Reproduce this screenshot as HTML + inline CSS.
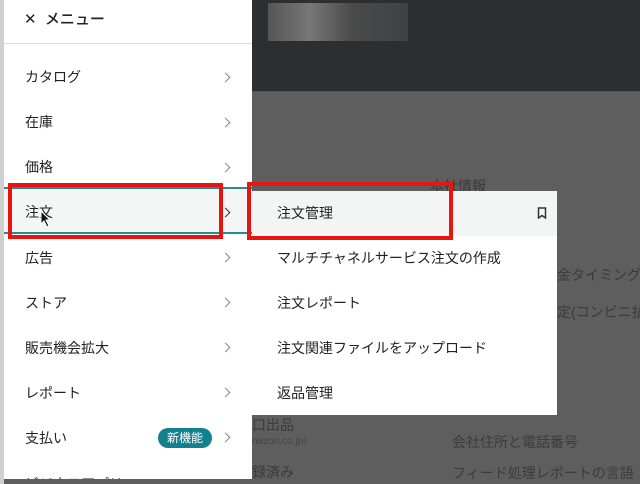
<!DOCTYPE html>
<html><head><meta charset="utf-8"><style>
*{margin:0;padding:0;box-sizing:border-box}
body{width:640px;height:484px;overflow:hidden;background:#5e5e5e;position:relative;font-family:"Liberation Sans","Noto Sans CJK JP",sans-serif;}
.abs{position:absolute}
.dark{left:252px;top:0;width:388px;height:91px;background:#2c2f31}
.blur{left:268px;top:3px;width:140px;height:38px;background:linear-gradient(90deg,#555,#777 30%,#4a4a4a 60%,#3f4244);}
.bgt{color:#3a3a3a;font-size:14px;white-space:nowrap}
.left{left:4px;top:0;width:248px;height:479px;background:#fff;overflow:hidden}
.hdr{left:0;top:0;width:248px;height:44px;border-bottom:1px solid #ddd}
.item{position:absolute;left:21px;font-size:14px;color:#222;line-height:20px;white-space:nowrap}
.chev{position:absolute;left:218px;width:7px;height:7px;border-right:1.5px solid #888;border-top:1.5px solid #888;transform:rotate(45deg)}
.sub{left:252px;top:191px;width:305px;height:224px;background:#fff}
.sitem{position:absolute;left:25px;font-size:14px;color:#222;line-height:20px}
.red{position:absolute;border:4px solid #e8140f}
</style></head><body>
<div class="abs dark"></div>
<div class="abs blur"></div>
<div class="abs" style="left:252px;top:91px;width:388px;height:1px;background:#555"></div>
<div class="abs bgt" style="left:430px;top:176px">本社情報</div>
<div class="abs bgt" style="left:557px;top:265px">金タイミング</div>
<div class="abs bgt" style="left:557px;top:302px">定(コンビニ払</div>
<div class="abs bgt" style="left:252px;top:415px">口出品</div>
<div class="abs bgt" style="left:252px;top:432px;font-size:10px;color:#444">nazon.co.jp）</div>
<div class="abs bgt" style="left:252px;top:462px">録済み</div>
<div class="abs bgt" style="left:452px;top:432px;color:#3c3c3c">会社住所と電話番号</div>
<div class="abs bgt" style="left:452px;top:463px;color:#3c3c3c">フィード処理レポートの言語</div>
<div class="abs" style="left:0;top:0;width:4px;height:484px;background:#cfcfcf"></div>

<div class="abs left">
  <div class="abs hdr"></div>
  <div class="item" style="left:20px;top:10px;font-size:15px;font-weight:500">✕&nbsp;&nbsp;メニュー</div>
  <div class="abs" style="left:0;top:187px;width:248px;height:47px;background:#f4f6f6;border-top:2px solid #2b8a97;border-bottom:2px solid #2b8a97"></div>
  <div class="item" style="top:67px">カタログ</div><div class="chev" style="top:74px"></div>
  <div class="item" style="top:112px">在庫</div><div class="chev" style="top:119px"></div>
  <div class="item" style="top:157px">価格</div><div class="chev" style="top:164px"></div>
  <div class="item" style="top:202px">注文</div><div class="chev" style="top:209px;border-color:#333"></div>
  <div class="item" style="top:248px">広告</div><div class="chev" style="top:254px"></div>
  <div class="item" style="top:293px">ストア</div><div class="chev" style="top:299px"></div>
  <div class="item" style="top:338px">販売機会拡大</div><div class="chev" style="top:344px"></div>
  <div class="item" style="top:383px">レポート</div><div class="chev" style="top:389px"></div>
  <div class="item" style="top:428px">支払い</div><div class="chev" style="top:434px"></div>
  <div class="abs" style="left:154px;top:428px;width:54px;height:20px;border-radius:10px;background:#13808e;color:#fff;font-size:12px;line-height:20px;text-align:center">新機能</div>
  <div class="item" style="top:474px">ビジネスアプリ</div>
</div>
<svg class="abs" style="left:40px;top:210px" width="12" height="18" viewBox="0 0 12 18"><path d="M1 1 L1 14 L4 11 L7 17 L9 16 L6 10 L10 10 Z" fill="#111" stroke="#fff" stroke-width="1"/></svg>

<div class="abs sub">
  <div class="abs" style="left:0;top:0;width:305px;height:45px;background:#f3f4f4"></div>
  <div class="sitem" style="top:12px">注文管理</div>
  <svg class="abs" style="left:285px;top:16px" width="10" height="12" viewBox="0 0 10 12"><path d="M1.5 11 V1 H8.5 V11 L5 8.5 Z" fill="none" stroke="#333" stroke-width="1.5"/></svg>
  <div class="sitem" style="top:57px">マルチチャネルサービス注文の作成</div>
  <div class="sitem" style="top:102px">注文レポート</div>
  <div class="sitem" style="top:147px">注文関連ファイルをアップロード</div>
  <div class="sitem" style="top:192px">返品管理</div>
</div>

<div class="red" style="left:8px;top:183px;width:215px;height:56px"></div>
<div class="red" style="left:247px;top:182px;width:206px;height:58px"></div>
</body></html>
